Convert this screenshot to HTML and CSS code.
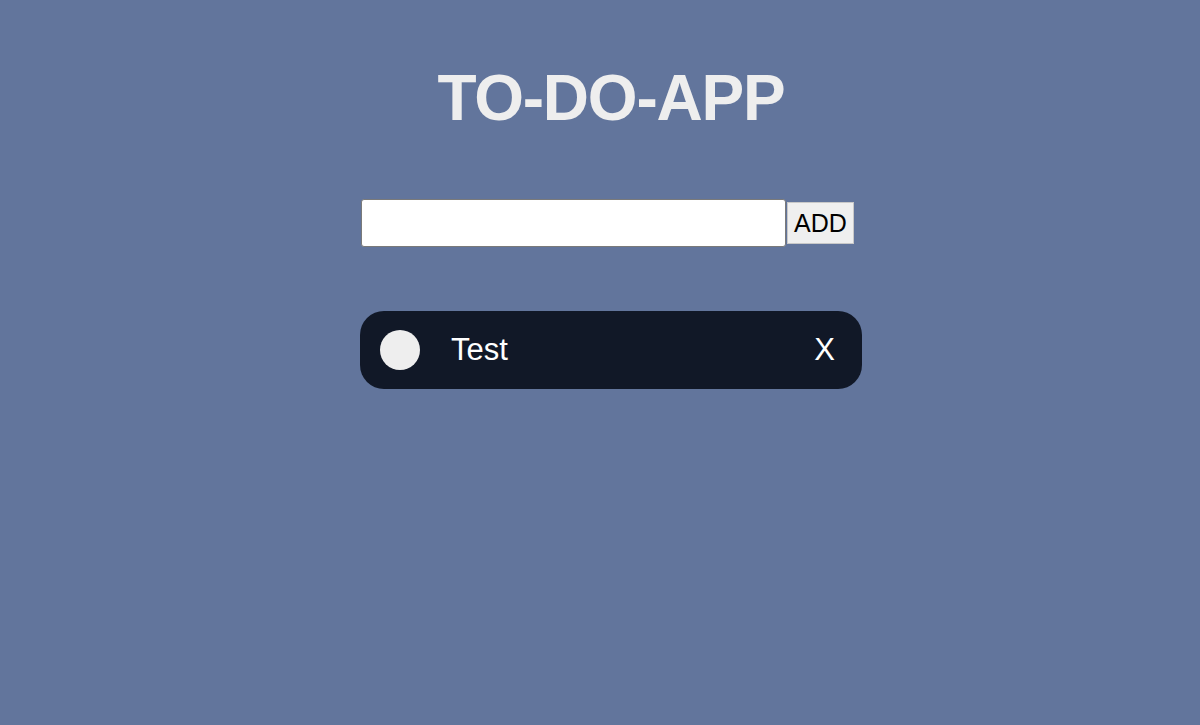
FILE: index.html
```html
<!DOCTYPE html>
<html lang="en">
<head>
<meta charset="utf-8">
<title>TO-DO-APP</title>
<link rel="stylesheet" href="styles.css">
</head>
<body>
<main class="app">
  <h1 class="title">TO-DO-APP</h1>
  <form class="add-form">
    <input class="add-input" type="text">
    <button class="add-btn" type="button">ADD</button>
  </form>
  <ul class="todo-list">
    <li class="todo">
      <span class="todo-check"></span>
      <span class="todo-text">Test</span>
      <span class="todo-remove">X</span>
    </li>
  </ul>
</main>
</body>
</html>
```

FILE: styles.css
```css
html, body {
  margin: 0;
  padding: 0;
}
body {
  background: #62759c;
  font-family: "Liberation Sans", Arial, sans-serif;
  min-height: 725px;
  padding-left: 22px;
}
.app {
  width: 502px;
  margin: 0 auto;
  display: flex;
  flex-direction: column;
}
.title {
  margin: 66px 0 0 0;
  font-size: 64px;
  line-height: 64px;
  font-weight: 700;
  color: #eeeeee;
  text-align: center;
  letter-spacing: -1.2px;
}
.add-form {
  margin: 69px 0 0 1px;
  display: flex;
  align-items: center;
  gap: 1px;
}
.add-input {
  box-sizing: border-box;
  width: 425px;
  height: 48px;
  margin: 0;
  border: 1px solid #7a7a7a;
  border-radius: 3px;
  background: #fff;
  font-size: 24px;
  padding: 0 6px;
}
.add-btn {
  box-sizing: border-box;
  width: 67px;
  height: 42px;
  margin: 0;
  padding: 0;
  border: 1px solid #c8c8c8;
  border-radius: 0;
  background: #efefef;
  color: #000;
  font-family: "Liberation Sans", Arial, sans-serif;
  font-size: 25px;
}
.todo-list {
  list-style: none;
  margin: 64px 0 0 0;
  padding: 0;
}
.todo {
  box-sizing: border-box;
  height: 78px;
  width: 502px;
  display: flex;
  align-items: center;
  padding: 0 27px 0 20px;
  background: #111827;
  border-radius: 24px;
  color: #ffffff;
}
.todo-check {
  width: 40px;
  height: 40px;
  border-radius: 50%;
  background: #eeeeee;
  flex: none;
}
.todo-text {
  margin-left: 31px;
  font-size: 31px;
  flex: 1;
}
.todo-remove {
  font-size: 31px;
}
```
